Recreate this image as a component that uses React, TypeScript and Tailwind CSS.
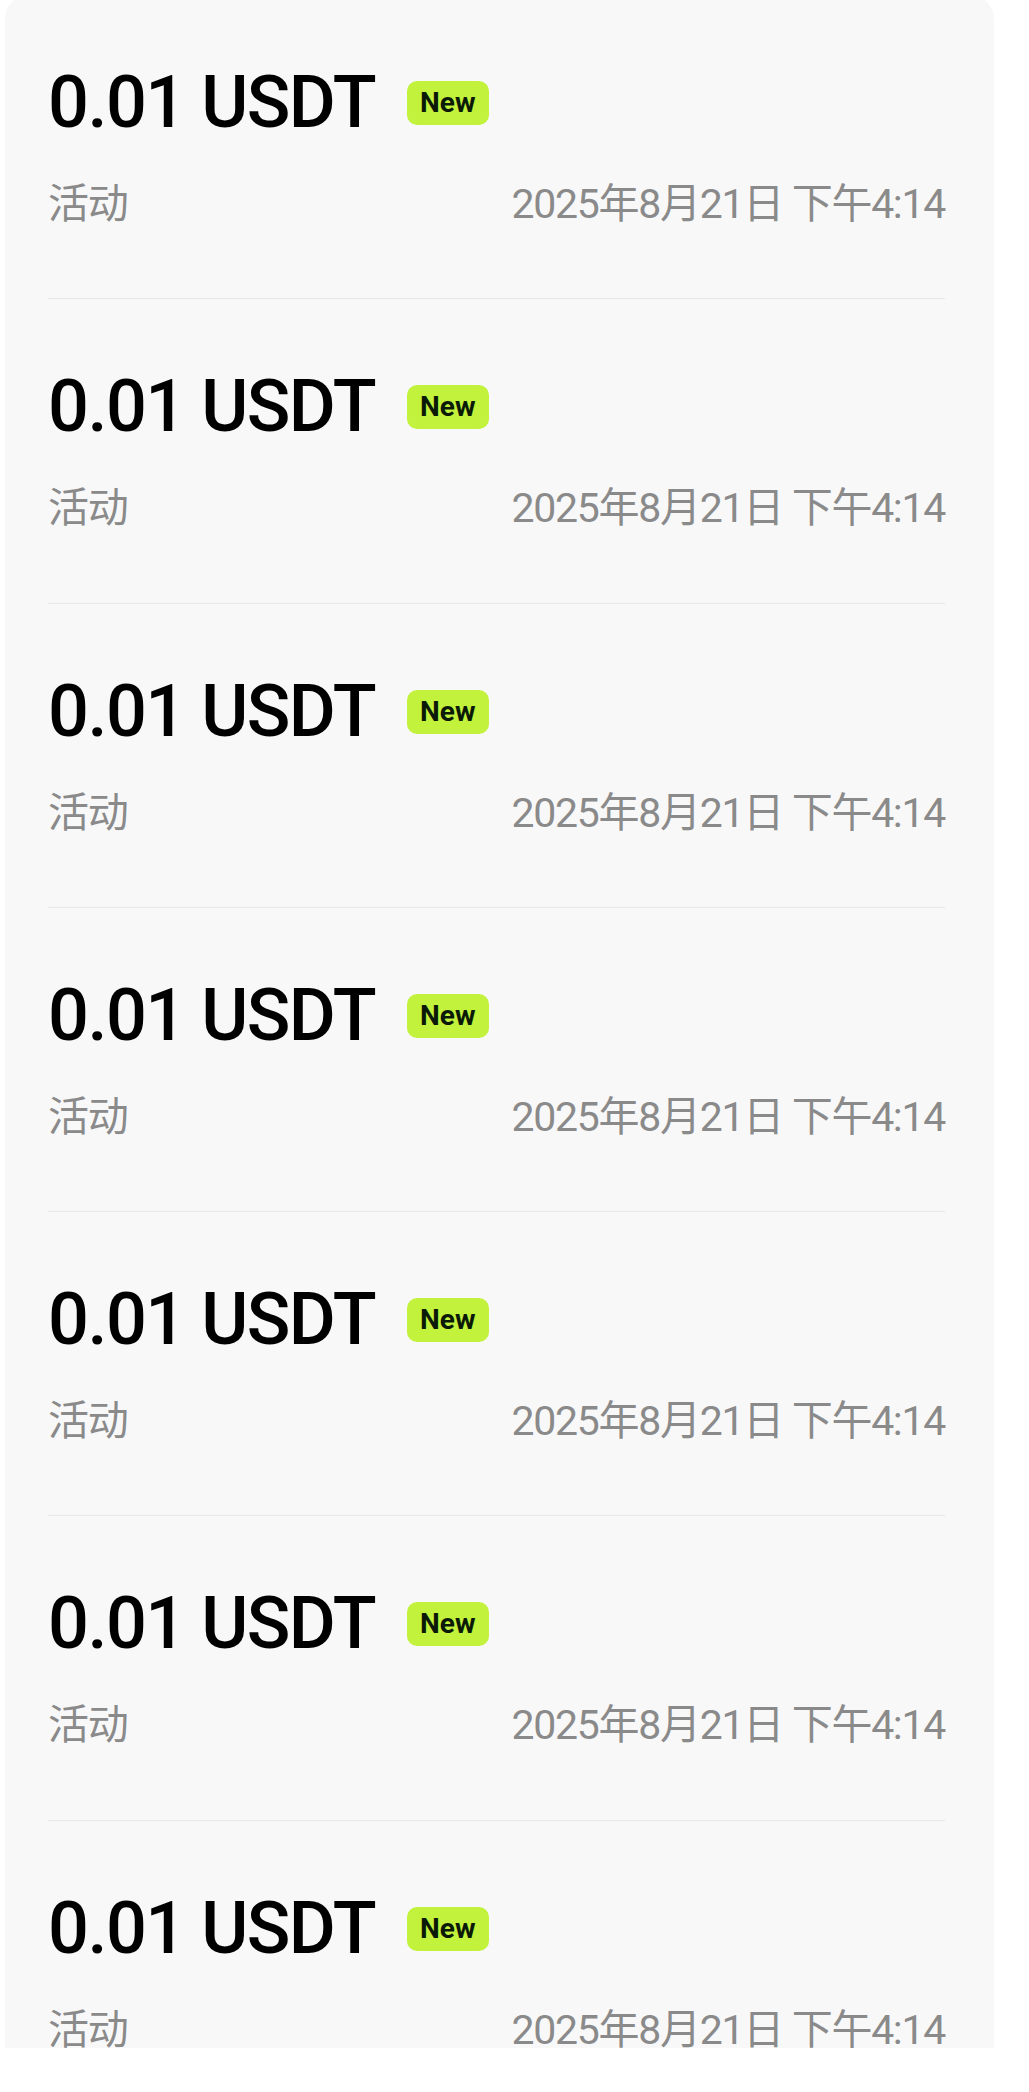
const items = Array.from({ length: 7 }, (_, i) => ({
  id: i,
  amount: '0.01 USDT',
  source: '活动',
  time: '2025年8月21日 下午4:14',
}));

const Row = ({ amount, source, time }: { amount: string; source: string; time: string }) => {
  return (
    <div className="pt-[72px] pb-[76.3px] last:pb-0 border-b border-[#e7e7e8] last:border-b-0">
      {/* amount + badge */}
      <div className="flex items-center h-[72px]">
        <span className="text-[72px] leading-[72px] font-medium tracking-[-1.5px] text-black">{amount}</span>
        <span className="ml-[32px] h-[44px] px-[13px] flex items-center rounded-[10px] bg-[#c2f23c] text-[28px] font-bold leading-none text-[#0b1a06]">
          New
        </span>
      </div>

      {/* source + time */}
      <div className="mt-[37px] h-[46px] flex justify-between text-[41px] leading-[56px] tracking-[-1.3px] text-[#8a8a8a]">
        <span>{source}</span>
        <span>{time}</span>
      </div>
    </div>
  );
};

const App = () => {
  return (
    <div
      className="min-h-[2092px] bg-white"
      style={{ fontFamily: 'Roboto, "Noto Sans CJK SC", sans-serif' }}
    >
      <div className="ml-[5px] w-[989px] -mt-[5px] rounded-t-[24px] bg-[#f8f8f9] pl-[43px] pr-[49px]">
        {items.map((item) => (
          <Row key={item.id} amount={item.amount} source={item.source} time={item.time} />
        ))}
      </div>
    </div>
  );
};

export default App;
